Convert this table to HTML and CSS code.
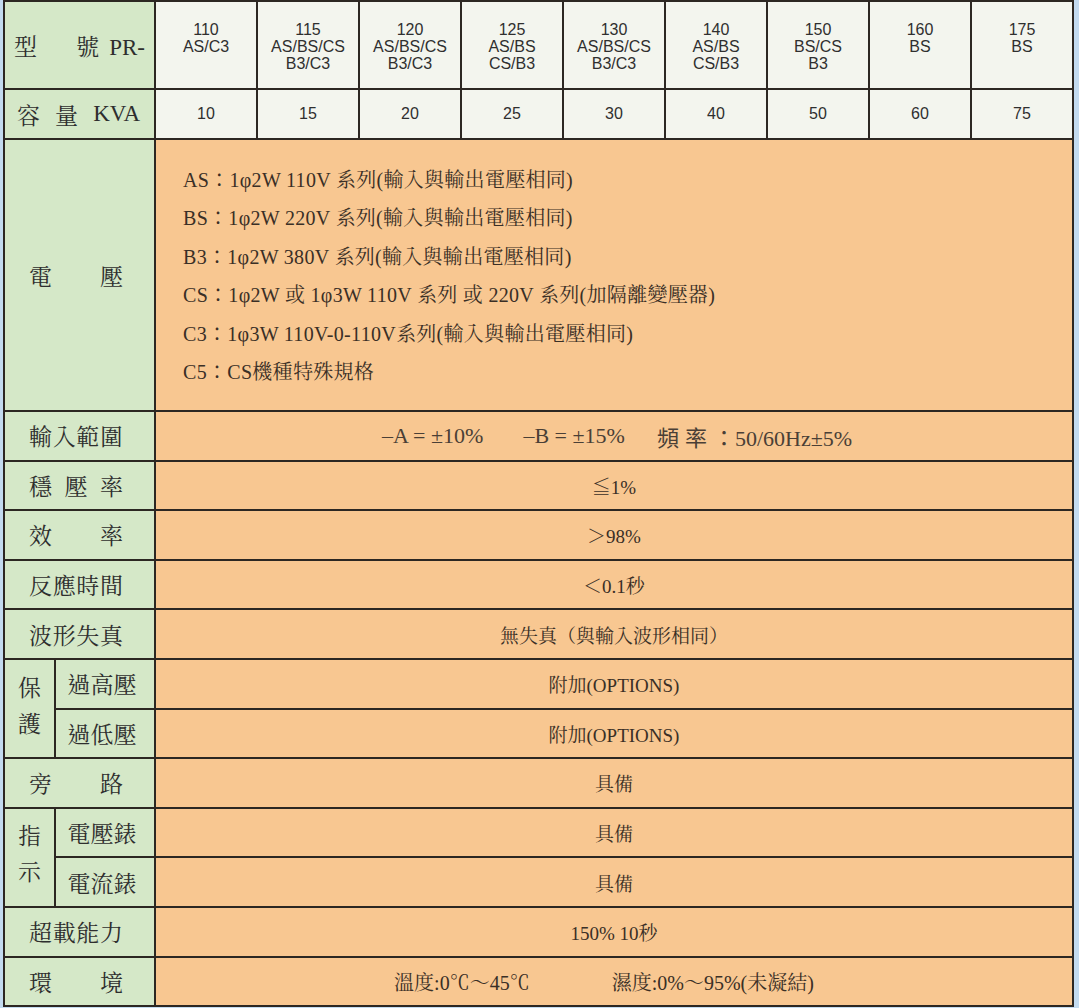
FILE: index.html
```html
<!DOCTYPE html>
<html lang="zh-Hant">
<head>
<meta charset="utf-8">
<title>規格表</title>
<link rel="stylesheet" href="styles.css">
</head>
<body>
<div class="spec">
  <div class="lbl lbl-model"><span>型</span><span>號<span class="sp"></span>PR-</span></div>
  <div class="hd">110<br>AS/C3</div>
  <div class="hd">115<br>AS/BS/CS<br>B3/C3</div>
  <div class="hd">120<br>AS/BS/CS<br>B3/C3</div>
  <div class="hd">125<br>AS/BS<br>CS/B3</div>
  <div class="hd">130<br>AS/BS/CS<br>B3/C3</div>
  <div class="hd">140<br>AS/BS<br>CS/B3</div>
  <div class="hd">150<br>BS/CS<br>B3</div>
  <div class="hd">160<br>BS</div>
  <div class="hd">175<br>BS</div>

  <div class="lbl lbl-kva"><span>容</span><span>量</span><span>KVA</span></div>
  <div class="kv">10</div>
  <div class="kv">15</div>
  <div class="kv">20</div>
  <div class="kv">25</div>
  <div class="kv">30</div>
  <div class="kv">40</div>
  <div class="kv">50</div>
  <div class="kv">60</div>
  <div class="kv">75</div>

  <div class="lbl"><span>電</span><span>壓</span></div>
  <div class="val volt">
    <p>AS：1φ2W 110V 系列(輸入與輸出電壓相同)</p>
    <p>BS：1φ2W 220V 系列(輸入與輸出電壓相同)</p>
    <p>B3：1φ2W 380V 系列(輸入與輸出電壓相同)</p>
    <p>CS：1φ2W 或 1φ3W 110V 系列 或 220V 系列(加隔離變壓器)</p>
    <p>C3：1φ3W 110V-0-110V系列(輸入與輸出電壓相同)</p>
    <p>C5：CS機種特殊規格</p>
  </div>

  <div class="lbl"><span>輸</span><span>入</span><span>範</span><span>圍</span></div>
  <div class="val times"><span>–A = ±10%</span><span class="gap1">–B = ±15%</span><span class="gap2"><span class="wide">頻率</span>：50/60Hz±5%</span></div>

  <div class="lbl"><span>穩</span><span>壓</span><span>率</span></div>
  <div class="val">≦1%</div>

  <div class="lbl"><span>效</span><span>率</span></div>
  <div class="val">＞98%</div>

  <div class="lbl"><span>反</span><span>應</span><span>時</span><span>間</span></div>
  <div class="val">＜0.1秒</div>

  <div class="lbl"><span>波</span><span>形</span><span>失</span><span>真</span></div>
  <div class="val">無失真（與輸入波形相同）</div>

  <div class="grp">保<br>護</div>
  <div class="sub">過高壓</div>
  <div class="val">附加(OPTIONS)</div>
  <div class="sub">過低壓</div>
  <div class="val">附加(OPTIONS)</div>

  <div class="lbl"><span>旁</span><span>路</span></div>
  <div class="val">具備</div>

  <div class="grp">指<br>示</div>
  <div class="sub">電壓錶</div>
  <div class="val">具備</div>
  <div class="sub">電流錶</div>
  <div class="val">具備</div>

  <div class="lbl"><span>超</span><span>載</span><span>能</span><span>力</span></div>
  <div class="val">150% 10秒</div>

  <div class="lbl"><span>環</span><span>境</span></div>
  <div class="val env"><span>溫度:0℃～45℃</span><span class="gap3">濕度:0%～95%(未凝結)</span></div>
</div>
</body>
</html>
```

FILE: styles.css
```css
html, body {
  margin: 0;
  padding: 0;
  background: #c3dbf0;
  overflow: hidden;
}

body {
  width: 1079px;
  height: 1008px;
}

.spec {
  margin-left: 3px;
  width: 1071px;
  box-sizing: border-box;
  display: grid;
  grid-template-columns: 49px 98px repeat(9, 100px);
  grid-template-rows: 86px 48px 270px repeat(12, 47.6px);
  gap: 2px;
  padding: 2px;
  background: #2c2722;
  font-family: "Liberation Serif", "Noto Serif CJK TC", "Noto Sans CJK TC", serif;
}

.lbl, .sub, .grp {
  background: #d5e8c8;
  color: #2e2e2e;
  font-size: 23px;
}

.lbl {
  grid-column: span 2;
  display: flex;
  align-items: center;
  justify-content: space-between;
  padding: 0 31px 0 24px;
}

.lbl-model {
  padding: 0 9px 0 9px;
}

.sp {
  display: inline-block;
  width: 10px;
}

.lbl-kva {
  padding: 0 14px 0 12px;
}

.sub {
  display: flex;
  align-items: center;
  justify-content: center;
  padding-right: 6px;
}

.grp {
  grid-row: span 2;
  display: flex;
  align-items: center;
  justify-content: center;
  text-align: center;
  line-height: 36px;
  padding-bottom: 4px;
}

.hd, .kv {
  background: #f3f5ee;
  color: #2f2f2f;
  font-family: "Liberation Sans", Arial, sans-serif;
  font-size: 16px;
  text-align: center;
}

.hd {
  line-height: 17px;
  padding-top: 19px;
  box-sizing: border-box;
}

.kv {
  display: flex;
  align-items: center;
  justify-content: center;
}

.val {
  grid-column: span 9;
  background: #f8c791;
  color: #3a2f26;
  font-size: 19px;
  display: flex;
  align-items: center;
  justify-content: center;
}

.volt {
  display: block;
  padding: 21px 0 0 27px;
  font-size: 20px;
  letter-spacing: 0.3px;
}

.volt p {
  margin: 0;
  line-height: 38.4px;
}

.times {
  font-family: "Liberation Serif", "Noto Sans CJK TC", serif;
  font-size: 22px;
  color: #4a3f36;
  padding-left: 6px;
}

.gap1 {
  margin-left: 40px;
}

.gap2 {
  margin-left: 32px;
}

.wide {
  letter-spacing: 6px;
}

.env {
  font-size: 20px;
  padding-right: 20px;
}

.gap3 {
  margin-left: 82px;
}
```
